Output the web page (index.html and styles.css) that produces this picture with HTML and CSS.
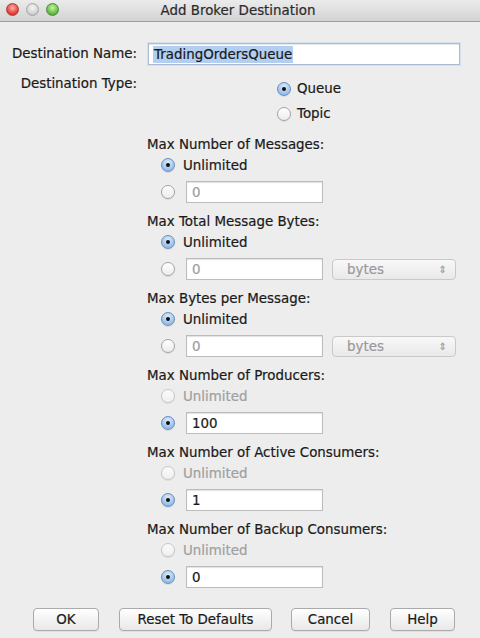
FILE: index.html
```html
<!DOCTYPE html>
<html>

<head>
    <title>Add Broker Destination</title>

    <link rel="stylesheet" href="styles.css">
</head>

<body>
    <div class="window">
        <!-- Title bar -->
        <div class="titlebar">
            <div class="lights">
                <span class="light red"></span>
                <span class="light gray"></span>
                <span class="light green"></span>
            </div>
            <div class="title">Add Broker Destination</div>
        </div>

        <div class="content">
            <div class="name-row">
                <label class="field-label">Destination Name:</label>
                <div class="text-field name-field"><span class="selection">TradingOrdersQueue</span></div>
            </div>

            <div class="type-row">
                <label class="field-label">Destination Type:</label>
                <div class="type-options">
                    <div class="type-option"><span class="radio checked"></span><span>Queue</span></div>
                    <div class="type-option"><span class="radio"></span><span>Topic</span></div>
                </div>
            </div>

            <!-- Limits -->
            <div class="limits">
                <div class="limit">
                    <div class="limit-title">Max Number of Messages:</div>
                    <div class="choice"><span class="radio checked"></span><span>Unlimited</span></div>
                    <div class="choice value-row"><span class="radio"></span><span class="text-field small off">0</span></div>
                </div>

                <div class="limit">
                    <div class="limit-title">Max Total Message Bytes:</div>
                    <div class="choice"><span class="radio checked"></span><span>Unlimited</span></div>
                    <div class="choice value-row">
                        <span class="radio"></span><span class="text-field small off">0</span>
                        <span class="unit-select">bytes<span class="arrows">&#8661;</span></span>
                    </div>
                </div>

                <div class="limit">
                    <div class="limit-title">Max Bytes per Message:</div>
                    <div class="choice"><span class="radio checked"></span><span>Unlimited</span></div>
                    <div class="choice value-row">
                        <span class="radio"></span><span class="text-field small off">0</span>
                        <span class="unit-select">bytes<span class="arrows">&#8661;</span></span>
                    </div>
                </div>

                <div class="limit">
                    <div class="limit-title">Max Number of Producers:</div>
                    <div class="choice off"><span class="radio"></span><span>Unlimited</span></div>
                    <div class="choice value-row"><span class="radio checked"></span><span class="text-field small">100</span></div>
                </div>

                <div class="limit">
                    <div class="limit-title">Max Number of Active Consumers:</div>
                    <div class="choice off"><span class="radio"></span><span>Unlimited</span></div>
                    <div class="choice value-row"><span class="radio checked"></span><span class="text-field small">1</span></div>
                </div>

                <div class="limit">
                    <div class="limit-title">Max Number of Backup Consumers:</div>
                    <div class="choice off"><span class="radio"></span><span>Unlimited</span></div>
                    <div class="choice value-row"><span class="radio checked"></span><span class="text-field small">0</span></div>
                </div>
            </div>

            <div class="buttons">
                <button class="btn ok">OK</button>
                <button class="btn reset">Reset To Defaults</button>
                <button class="btn cancel">Cancel</button>
                <button class="btn help">Help</button>
            </div>
        </div>
    </div>
</body>

</html>
```

FILE: styles.css
```css
/* Dialog window */
body {
    margin: 0;
    background-color: #ededed;
    font-family: "DejaVu Sans", "Liberation Sans", sans-serif;
    font-size: 13.4px;
    color: #1a1a1a;
    -webkit-text-stroke: 0.2px;
}

.window {
    width: 480px;
    height: 638px;
    background-color: #ededed;
}

/* Title bar */
.titlebar {
    position: relative;
    height: 21px;
    background: linear-gradient(#ebebeb, #d3d3d3);
    border-bottom: 1px solid #9d9d9d;
    display: flex;
    align-items: center;
    justify-content: center;
}

.lights {
    position: absolute;
    left: 6px;
    top: 3px;
    display: flex;
    gap: 7px;
}

.light {
    width: 13px;
    height: 13px;
    border-radius: 50%;
    box-sizing: border-box;
}

.light.red {
    background: radial-gradient(circle at 50% 35%, #ffb3ad, #e8453c 60%, #b8231b);
    border: 1px solid #b53a33;
}

.light.gray {
    background: radial-gradient(circle at 50% 35%, #f6f6f6, #d4d4d4 60%, #acacac);
    border: 1px solid #a6a6a6;
}

.light.green {
    background: radial-gradient(circle at 50% 35%, #c8f2a4, #68c04a 60%, #3c8c2a);
    border: 1px solid #4a8f37;
}

.title {
    color: #2c2c2c;
    margin-left: -4px;
}

/* Form body */
.content {
    padding-top: 21px;
}

.name-row {
    display: flex;
    align-items: center;
    gap: 11px;
}

.field-label {
    flex: none;
    width: 137px;
    text-align: right;
    line-height: 16px;
}

.text-field {
    display: flex;
    align-items: center;
    box-sizing: border-box;
    height: 22px;
    background-color: #fff;
    border: 1px solid #bcbcbc;
    box-shadow: inset 0 1px 1px rgba(0, 0, 0, 0.12);
    padding-left: 4px;
}

.name-field {
    width: 312px;
    border-color: #a9bcd3;
    box-shadow: 0 0 0 1px #d3e1f1, inset 0 1px 1px rgba(0, 0, 0, 0.1);
}

.selection {
    background-color: #b2cff2;
    line-height: 17px;
    padding: 0 1px;
}

.type-row {
    display: flex;
    align-items: flex-start;
    margin-top: 11px;
}

.type-options {
    margin-left: 140px;
}

.type-option {
    display: flex;
    align-items: center;
    gap: 6px;
    height: 25px;
}

/* Radio buttons */
.radio {
    flex: none;
    position: relative;
    width: 14px;
    height: 14px;
    box-sizing: border-box;
    border-radius: 50%;
    border: 1px solid #a3a3a3;
    background: linear-gradient(#ffffff, #ececec);
    box-shadow: 0 1px 1px rgba(0, 0, 0, 0.08);
}

.radio.checked {
    border-color: #6a8fbd;
    background: radial-gradient(circle at 50% 30%, #dcebfb, #a7c9ee 55%, #7aa8df);
}

.radio.checked:after {
    content: "";
    position: absolute;
    left: 4px;
    top: 4px;
    width: 4px;
    height: 4px;
    border-radius: 50%;
    background-color: #111;
}

.choice.off .radio {
    border-color: #c6c6c6;
    background: linear-gradient(#fafafa, #f0f0f0);
}

/* Limit groups */
.limits {
    margin-top: 10px;
    padding-left: 147px;
}

.limit {
    margin-bottom: 9px;
}

.limit-title {
    line-height: 18px;
}

.choice {
    display: flex;
    align-items: center;
    gap: 8px;
    height: 22px;
    padding-left: 14px;
}

.choice.off {
    color: #a0a0a0;
}

.value-row {
    height: 24px;
    margin-top: 4px;
    gap: 11px;
}

.text-field.small {
    width: 137px;
    padding-left: 5px;
}

.text-field.off {
    color: #9e9e9e;
}

.unit-select {
    display: flex;
    align-items: center;
    justify-content: space-between;
    box-sizing: border-box;
    width: 124px;
    height: 21px;
    margin-left: -2px;
    padding: 0 8px 0 14px;
    border: 1px solid #c9c9c9;
    border-radius: 4px;
    background: linear-gradient(#f8f8f8, #e9e9e9);
    color: #9a9a9a;
}

.arrows {
    font-size: 10px;
    color: #a5a5a5;
}

/* Dialog buttons */
.buttons {
    display: flex;
    gap: 20px;
    margin-top: 19px;
    padding-left: 33px;
}

.btn {
    height: 23px;
    box-sizing: border-box;
    font-family: "DejaVu Sans", "Liberation Sans", sans-serif;
    font-size: 13.4px;
    color: #1a1a1a;
    -webkit-text-stroke: 0.2px;
    border: 1px solid #aaaaaa;
    border-radius: 4px;
    background: linear-gradient(#ffffff, #f1f1f1 60%, #e8e8e8);
    box-shadow: 0 1px 0 rgba(0, 0, 0, 0.05);
    padding: 0;
}

.btn.ok {
    width: 66px;
}

.btn.reset {
    width: 153px;
}

.btn.cancel {
    width: 79px;
    margin-left: -1px;
}

.btn.help {
    width: 65px;
}
```
